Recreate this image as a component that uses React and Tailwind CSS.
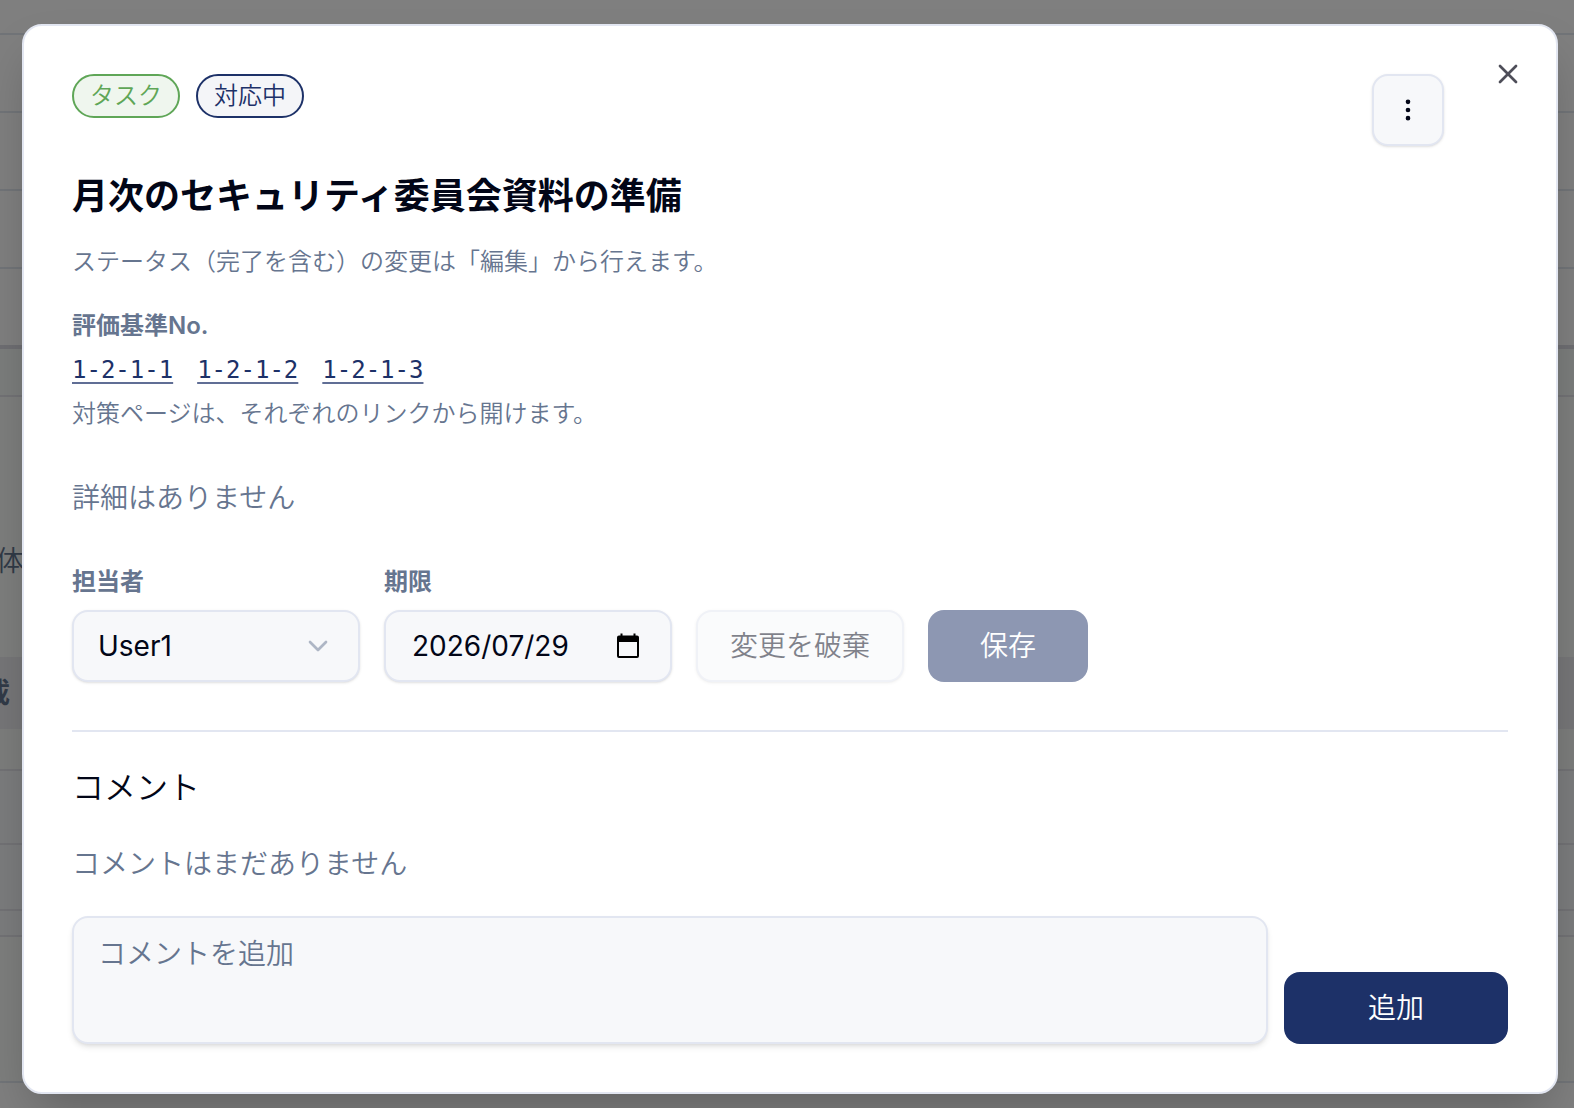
import React, { useState } from "react";
import { ChevronDown, EllipsisVertical, X } from "lucide-react";

const criteria = ["1-2-1-1", "1-2-1-2", "1-2-1-3"];

function Badge({ className, children }) {
  return (
    <span
      className={`flex h-11 items-center rounded-full border-2 px-4 text-2xl ${className}`}
    >
      {children}
    </span>
  );
}

function CalendarIcon() {
  return (
    <svg width="24" height="26" viewBox="0 0 24 26" fill="none">
      <path
        d="M3 2.500h18a2 2 0 0 1 2 2v18.500a2 2 0 0 1-2 2H3a2 2 0 0 1-2-2V4.500a2 2 0 0 1 2-2Zm0 6.500v14h18V9Z"
        fill="black"
        fillRule="evenodd"
      />
      <path d="M4.500 0.500h2v3h-2zM17.500 0.500h2v3h-2z" fill="black" />
    </svg>
  );
}

// page behind the dialog
function PageBackground() {
  return (
    <div className="flex h-full flex-col overflow-hidden bg-white text-[28px] text-slate-500">
      <div className="h-[35px] shrink-0 border-b-2 border-slate-200" />
      <div className="h-[78px] shrink-0 border-b-2 border-slate-200" />
      <div className="h-[78px] shrink-0 border-b-2 border-slate-200" />
      <div className="h-[78px] shrink-0 border-b-2 border-slate-200" />
      <div className="h-[80px] shrink-0 border-b-4 border-[#dddde4]" />
      <div className="h-12 shrink-0 border-b-2 border-[#e4e4ea] bg-[#f7faf8]" />
      <div className="flex h-[260px] shrink-0 items-end bg-[#fbfcfb] pb-[76px]">
        <span className="-ml-1 leading-10">体</span>
      </div>
      <div className="flex h-[72px] shrink-0 items-center bg-[#ededf0]">
        <span className="-ml-4.5 font-bold">載</span>
      </div>
      <div className="h-[42px] shrink-0 border-b-2 border-[#e4e4ea] bg-[#f9fbf9]" />
      <div className="h-[74px] shrink-0 border-b-2 border-[#e4e4ea] bg-[#f7f8fa]" />
      <div className="h-[66px] shrink-0 border-b-2 border-[#e4e4ea] bg-[#f7f8fa]" />
      <div className="h-[26px] shrink-0 border-b-2 border-[#e4e4ea] bg-[#f7f8fa]" />
      <div className="h-[146px] shrink-0 border-b-2 border-slate-200 bg-[#fafcfa]" />
    </div>
  );
}

function TaskDialog() {
  const [assignee, setAssignee] = useState("User1");
  const [dueDate, setDueDate] = useState("2026/07/29");
  const [comment, setComment] = useState("");

  return (
    <div
      role="dialog"
      aria-labelledby="task-title"
      className="relative w-full rounded-[20px] border-2 border-[#e2e6f1] bg-white p-12 shadow-2xl"
    >
      <button
        type="button"
        aria-label="閉じる"
        className="absolute top-8 right-8 text-[#4e4e59]"
      >
        <X size={32} strokeWidth={2} />
      </button>

      <div className="flex items-start justify-between pr-16">
        <div className="flex gap-4">
          <Badge className="border-[#5fa657] bg-[#eff6ee] text-[#5fa657]">
            タスク
          </Badge>
          <Badge className="border-[#1d3168] bg-[#f4f5f8] text-[#1d3168]">
            対応中
          </Badge>
        </div>
        <button
          type="button"
          aria-label="メニュー"
          className="flex size-[72px] items-center justify-center rounded-2xl border-2 border-[#e2e6f1] bg-[#f7f8fa] text-[#020617] shadow-sm"
        >
          <EllipsisVertical size={28} strokeWidth={2} />
        </button>
      </div>

      <h2
        id="task-title"
        className="mt-6 text-4xl leading-[52px] font-semibold text-[#020617]"
      >
        月次のセキュリティ委員会資料の準備
      </h2>
      <p className="mt-6 text-2xl">
        ステータス（完了を含む）の変更は「編集」から行えます。
      </p>

      <h3 className="mt-8 text-2xl font-semibold">評価基準No.</h3>
      <div className="mt-3 flex gap-6">
        {criteria.map((no) => (
          <a
            key={no}
            href={`#${no}`}
            className="font-['DejaVu_Sans_Mono',monospace] text-2xl font-normal text-[#1d3168] underline decoration-[#1d3168]/70 decoration-2 underline-offset-4"
          >
            {no}
          </a>
        ))}
      </div>
      <p className="mt-3 text-2xl">
        対策ページは、それぞれのリンクから開けます。
      </p>

      <p className="mt-12 text-[28px] leading-10">詳細はありません</p>

      <div className="mt-12 flex flex-wrap items-end gap-6">
        <div className="flex w-72 flex-col gap-3">
          <label htmlFor="assignee" className="text-2xl font-semibold">
            担当者
          </label>
          <div className="relative">
            <select
              id="assignee"
              value={assignee}
              onChange={(e) => setAssignee(e.target.value)}
              className="h-[72px] w-full appearance-none rounded-2xl border-2 border-[#e2e6f1] bg-[#f7f8fa] px-6 text-[28px] font-normal text-[#020617] shadow-sm"
            >
              <option>User1</option>
            </select>
            <ChevronDown
              size={32}
              className="pointer-events-none absolute top-5 right-[26px] text-[#aeb6c5]"
            />
          </div>
        </div>
        <div className="flex w-72 flex-col gap-3">
          <label htmlFor="due" className="text-2xl font-semibold">
            期限
          </label>
          <div className="flex h-[72px] items-center rounded-2xl border-2 border-[#e2e6f1] bg-[#f7f8fa] pr-[30px] pl-[26px] shadow-sm">
            <input
              id="due"
              type="text"
              value={dueDate}
              onChange={(e) => setDueDate(e.target.value)}
              className="w-full min-w-0 flex-1 text-[28px] font-normal text-[#020617] outline-none"
            />
            <button type="button" aria-label="日付を選択">
              <CalendarIcon />
            </button>
          </div>
        </div>
        <button
          type="button"
          disabled
          className="h-[72px] w-52 rounded-2xl border-2 border-[#e2e6f1] bg-[#f7f8fa] text-[28px] text-[#020617] opacity-50 shadow-sm"
        >
          変更を破棄
        </button>
        <button
          type="button"
          disabled
          className="h-[72px] w-40 rounded-2xl bg-[#1d3168] text-[28px] text-white opacity-50"
        >
          保存
        </button>
      </div>

      <section className="mt-12 border-t-2 border-[#e2e6f1] pt-8">
        <h3 className="text-[32px] leading-[48px] text-[#020617]">コメント</h3>
        <p className="mt-8 text-[28px] leading-10">コメントはまだありません</p>
        <div className="mt-8 flex items-end gap-4">
          <textarea
            aria-label="コメント"
            placeholder="コメントを追加"
            value={comment}
            onChange={(e) => setComment(e.target.value)}
            className="block h-32 min-w-0 flex-1 resize-none rounded-2xl border-2 border-[#e2e6f1] bg-[#f7f8fa] px-6 py-4 text-[28px] leading-10 text-[#020617] shadow-md placeholder:text-[#66758f]"
          />
          <button
            type="button"
            className="h-[72px] w-56 rounded-2xl bg-[#1d3168] text-[28px] text-white"
          >
            追加
          </button>
        </div>
      </section>
    </div>
  );
}

export default function App() {
  return (
    <div className="relative min-h-screen font-['Inter','Noto_Sans_CJK_JP',sans-serif] font-[350] text-[#66758f]">
      <div className="absolute inset-0" aria-hidden="true">
        <PageBackground />
      </div>
      <div className="relative flex min-h-screen items-start bg-black/50 pt-6 pr-4 pl-[22px]">
        <TaskDialog />
      </div>
    </div>
  );
}
